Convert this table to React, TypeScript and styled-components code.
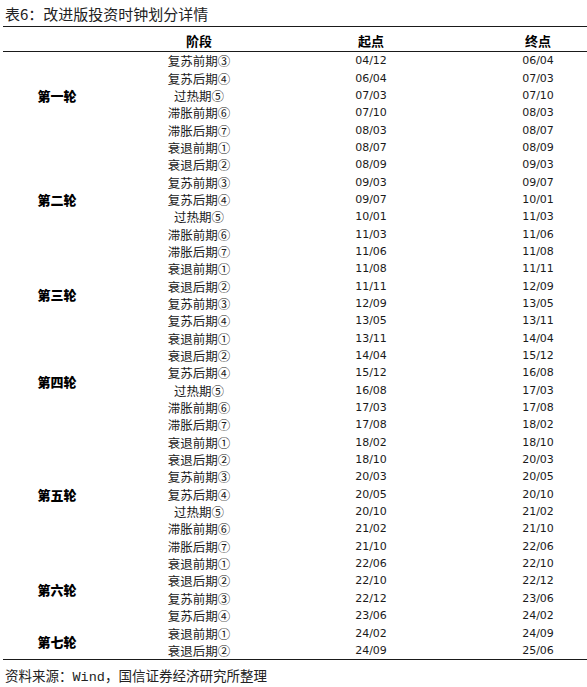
import React from "react";
import styled, { createGlobalStyle } from "styled-components";

interface stageRow {
  stage: string;
  start: string;
  end: string;
}
interface round {
  name: string;
  rows: stageRow[];
}

const r = (stage: string, start: string, end: string): stageRow => ({
  stage,
  start,
  end,
});

const ROUNDS: round[] = [
  {
    name: "第一轮",
    rows: [
      r("复苏前期③", "04/12", "06/04"),
      r("复苏后期④", "06/04", "07/03"),
      r("过热期⑤", "07/03", "07/10"),
      r("滞胀前期⑥", "07/10", "08/03"),
      r("滞胀后期⑦", "08/03", "08/07"),
    ],
  },
  {
    name: "第二轮",
    rows: [
      r("衰退前期①", "08/07", "08/09"),
      r("衰退后期②", "08/09", "09/03"),
      r("复苏前期③", "09/03", "09/07"),
      r("复苏后期④", "09/07", "10/01"),
      r("过热期⑤", "10/01", "11/03"),
      r("滞胀前期⑥", "11/03", "11/06"),
      r("滞胀后期⑦", "11/06", "11/08"),
    ],
  },
  {
    name: "第三轮",
    rows: [
      r("衰退前期①", "11/08", "11/11"),
      r("衰退后期②", "11/11", "12/09"),
      r("复苏前期③", "12/09", "13/05"),
      r("复苏后期④", "13/05", "13/11"),
    ],
  },
  {
    name: "第四轮",
    rows: [
      r("衰退前期①", "13/11", "14/04"),
      r("衰退后期②", "14/04", "15/12"),
      r("复苏后期④", "15/12", "16/08"),
      r("过热期⑤", "16/08", "17/03"),
      r("滞胀前期⑥", "17/03", "17/08"),
      r("滞胀后期⑦", "17/08", "18/02"),
    ],
  },
  {
    name: "第五轮",
    rows: [
      r("衰退前期①", "18/02", "18/10"),
      r("衰退后期②", "18/10", "20/03"),
      r("复苏前期③", "20/03", "20/05"),
      r("复苏后期④", "20/05", "20/10"),
      r("过热期⑤", "20/10", "21/02"),
      r("滞胀前期⑥", "21/02", "21/10"),
      r("滞胀后期⑦", "21/10", "22/06"),
    ],
  },
  {
    name: "第六轮",
    rows: [
      r("衰退前期①", "22/06", "22/10"),
      r("衰退后期②", "22/10", "22/12"),
      r("复苏前期③", "22/12", "23/06"),
      r("复苏后期④", "23/06", "24/02"),
    ],
  },
  {
    name: "第七轮",
    rows: [
      r("衰退前期①", "24/02", "24/09"),
      r("衰退后期②", "24/09", "25/06"),
    ],
  },
];

const CJK = `"Noto Sans CJK SC", "Noto Sans", sans-serif`;

function App() {
  return (
    <>
      <GlobalStyle />
      <Page>
        <Title>表6：改进版投资时钟划分详情</Title>
        <Table>
          <HeadCell>&nbsp;</HeadCell>
          <HeadCell>阶段</HeadCell>
          <HeadCell>起点</HeadCell>
          <HeadCell>终点</HeadCell>
          {ROUNDS.map((round) => (
            <React.Fragment key={round.name}>
              <RoundCell $span={round.rows.length}>{round.name}</RoundCell>
              {round.rows.map((row, i) => (
                <React.Fragment key={`${round.name}${i}`}>
                  <StageCell>{row.stage}</StageCell>
                  <DateCell>{row.start}</DateCell>
                  <DateCell>{row.end}</DateCell>
                </React.Fragment>
              ))}
            </React.Fragment>
          ))}
        </Table>
        <Source>
          资料来源：<Mono>Wind</Mono>，国信证券经济研究所整理
        </Source>
      </Page>
    </>
  );
}

const GlobalStyle = createGlobalStyle`
  body {
    margin: 0;
    background: #fff;
    font-family: ${CJK};
    color: #1a1a1a;
  }
`;
const Page = styled.div`
  width: 587px;
  height: 687px;
  overflow: hidden;
  padding-left: 3px;
  box-sizing: border-box;
`;
const Title = styled.div`
  height: 26px;
  padding-left: 2px;
  font-size: 15px;
  line-height: 28px;
  color: #222;
  white-space: nowrap;
`;
const Table = styled.div`
  display: grid;
  width: 618px;
  grid-template-columns: 108px 176px 168px 166px;
  grid-template-rows: 25px;
  grid-auto-rows: 17.35px;
  border-top: 1.5px solid #1a1a1a;
  border-bottom: 1.5px solid #1a1a1a;
`;
const Cell = styled.div`
  display: flex;
  align-items: center;
  justify-content: center;
  white-space: nowrap;
`;
const HeadCell = styled(Cell)`
  font-size: 13px;
  font-weight: 700;
  color: #000;
  padding-top: 2px;
  border-bottom: 1.5px solid #1a1a1a;
`;
const RoundCell = styled(Cell)<{ $span: number }>`
  grid-column: 1;
  grid-row: span ${(p) => p.$span};
  font-size: 13px;
  font-weight: 900;
  color: #000;
`;
const StageCell = styled(Cell)`
  grid-column: 2;
  font-size: 12.5px;
`;
const DateCell = styled(Cell)`
  font-family: "DejaVu Sans", sans-serif;
  font-size: 11px;
  color: #1a1a1a;
`;
const Source = styled.div`
  padding-left: 2px;
  font-size: 13.5px;
  line-height: 30px;
  color: #222;
  white-space: nowrap;
`;
const Mono = styled.span`
  font-family: "Liberation Mono", monospace;
`;

export default App;
